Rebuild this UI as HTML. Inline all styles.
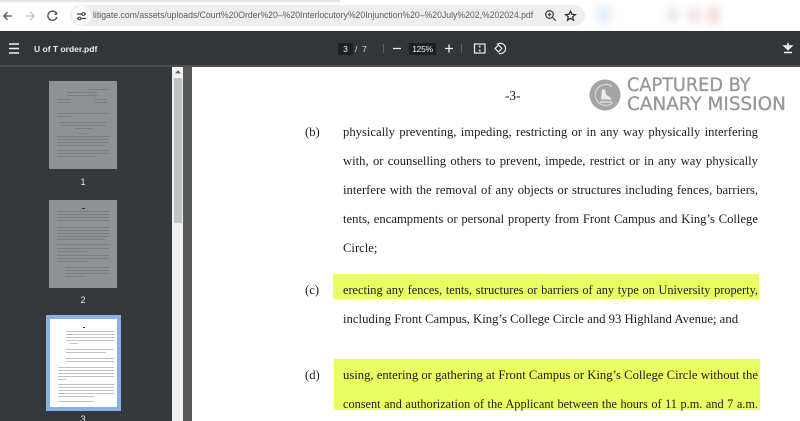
<!DOCTYPE html>
<html><head><meta charset="utf-8"><style>
*{box-sizing:border-box}
html,body{margin:0;padding:0;width:800px;height:421px;overflow:hidden;background:#fff}
body{position:relative;font-family:"Liberation Sans",sans-serif}
.a{position:absolute}
.l{position:absolute;left:343px;width:415px;font:12.65px/18px "Liberation Serif",serif;color:#1c1c1c;text-align:justify;text-align-last:justify;white-space:normal}
.m{position:absolute;left:305px;font:12.65px/18px "Liberation Serif",serif;color:#1c1c1c}
.tn{position:absolute;left:49px;width:68px;background:#8f9192;overflow:hidden}
.tn i,.t3 i{position:absolute;display:block;height:1px}
.tn i{background:#7b7d7e}
.t3 i{background:#c2c2c2}
.num{position:absolute;width:20px;text-align:center;left:73px;font-size:9px;color:#e8e8e8}
</style></head><body>
<div class="a" style="left:0;top:0;width:800px;height:31px;background:#fff"></div>
<div class="a" style="left:0;top:0;width:340px;height:2px;background:#e6e6e6"></div>
<div class="a" style="left:70px;top:5px;width:515px;height:21px;border-radius:11px;background:#f0eeeb"></div>
<div class="a" style="left:72px;top:6px;width:19px;height:19px;border-radius:50%;background:#fbfbfa"></div>
<div class="a" style="left:590px;top:4px;width:210px;height:22px;filter:blur(4px)">
<div class="a" style="left:7px;top:2px;width:14px;height:18px;background:#e3edf8"></div>
<div class="a" style="left:77px;top:4px;width:11px;height:14px;background:#e6ebe7"></div>
<div class="a" style="left:97px;top:3px;width:13px;height:16px;background:#f5e4e4"></div>
<div class="a" style="left:117px;top:2px;width:13px;height:18px;background:#f8dcdc"></div>
</div>
<svg class="a" style="left:0;top:0" width="800" height="31" fill="none">
<path d="M12 16H4M7.5 12.2 3.8 16l3.7 3.8" stroke="#555" stroke-width="1.3"/>
<path d="M26 16h8M30.5 12.2l3.7 3.8-3.7 3.8" stroke="#bbb" stroke-width="1.3"/>
<path d="M56.5 13.5a4.6 4.6 0 1 0 .4 3.5" stroke="#555" stroke-width="1.4"/><path d="M57.2 11.5v3.4h-3.4z" fill="#555"/>
<path d="M77 14h5M85 14h1M77 18.5h1M81 18.5h5" stroke="#444" stroke-width="1.3"/><circle cx="83.5" cy="14" r="1.4" stroke="#444"/><circle cx="79.5" cy="18.5" r="1.4" stroke="#444"/>
<circle cx="549.5" cy="14.5" r="3.8" stroke="#444" stroke-width="1.3"/><path d="m552.3 17.3 3.6 3.4M547.8 14.5h3.4M549.5 12.8v3.4" stroke="#444" stroke-width="1.2"/>
<path d="m570.5 11.2 1.4 3.1 3.4.3-2.6 2.2.8 3.3-3-1.8-3 1.8.8-3.3-2.6-2.2 3.4-.3z" stroke="#333" stroke-width="1.3"/>
</svg>
<div class="a" style="left:93px;top:9px;font-size:9.6px;line-height:14px;color:#5c5c5c;white-space:nowrap;transform-origin:0 0;transform:scaleX(.905)">litigate.com/assets/uploads/Court%20Order%20–%20Interlocutory%20Injunction%20–%20July%202,%202024.pdf</div>

<div class="a" style="left:0;top:31px;width:800px;height:35px;background:#323639"></div>
<div class="a" style="left:0;top:65px;width:800px;height:2px;background:#4a4d4f"></div>
<svg class="a" style="left:0;top:31px" width="800" height="35" fill="none">
<path d="M9 13h10M9 17.5h10M9 22h10" stroke="#f1f1f1" stroke-width="1.4"/>
<path d="M383.5 13v9M461.5 13v9" stroke="#5d6063"/>
<path d="M393 17.5h8M445 17.5h8M449 13.5v8" stroke="#eee" stroke-width="1.3"/>
<rect x="474.5" y="13" width="10.5" height="9" stroke="#eee" stroke-width="1.2"/><path d="M479.8 14.5v2M479.8 18.5v2" stroke="#eee" stroke-width="1.3"/>
<path d="M497 13.5a5.2 5.2 0 1 1 2 9" stroke="#eee" stroke-width="1.2"/><path d="m498.5 14 3.4 3.5-3.4 3.5-3.4-3.5z" stroke="#eee" stroke-width="1.2"/>
<path d="M788 12v5M784.5 15l3.5 3.5 3.500-3.500z" stroke="#f1f1f1" stroke-width="1.6"/><path d="M784 21.5h8" stroke="#f1f1f1" stroke-width="1.5"/>
</svg>
<div class="a" style="left:34px;top:42px;font-size:8.5px;font-weight:bold;line-height:14px;color:#ececec;white-space:nowrap">U of T order.pdf</div>
<div class="a" style="left:338px;top:43px;width:15px;height:12px;background:#1d2023;color:#eee;font-size:8.5px;line-height:12px;text-align:center">3</div>
<div class="a" style="left:355px;top:43px;font-size:8.5px;line-height:12px;color:#ddd">/ &nbsp;7</div>
<div class="a" style="left:409px;top:43px;width:27px;height:12px;background:#1d2023;color:#eee;font-size:8.5px;letter-spacing:-.3px;line-height:12px;text-align:center">125%</div>

<div class="a" style="left:0;top:67px;width:172px;height:354px;background:#35393c"></div>
<div class="a" style="left:172px;top:67px;width:11px;height:354px;background:#f1f1f1"></div>
<div class="a" style="left:174px;top:78px;width:8px;height:145px;background:#c1c3c1"></div>
<svg class="a" style="left:174px;top:69px" width="8" height="6"><path d="M4 1 7 4.5H1z" fill="#6a6a6a"/></svg>
<div class="a" style="left:183px;top:67px;width:9px;height:354px;background:#55585a"></div>

<div class="tn" style="top:81px;height:88px">
<i style="left:38px;top:8px;width:22px"></i><i style="left:18px;top:11px;width:30px"></i><i style="left:18px;top:14px;width:30px"></i>
<i style="left:8px;top:18px;width:14px"></i><i style="left:46px;top:18px;width:12px"></i><i style="left:8px;top:21px;width:14px"></i><i style="left:46px;top:21px;width:12px"></i>
<i style="left:8px;top:32px;width:52px"></i><i style="left:8px;top:35px;width:16px"></i><i style="left:10px;top:41px;width:48px"></i><i style="left:12px;top:44px;width:44px"></i><i style="left:26px;top:47px;width:18px"></i>
<i style="left:30px;top:52px;width:8px"></i><i style="left:8px;top:55px;width:52px"></i><i style="left:8px;top:58px;width:52px"></i><i style="left:8px;top:61px;width:52px"></i><i style="left:8px;top:64px;width:48px"></i>
<i style="left:8px;top:69px;width:52px"></i><i style="left:8px;top:72px;width:52px"></i><i style="left:8px;top:75px;width:40px"></i>
</div>
<div class="num" style="top:177px">1</div>
<div class="tn" style="top:200px;height:88px">
<i style="left:33px;top:8px;width:3px;background:#333"></i><i style="left:8px;top:11px;width:52px"></i><i style="left:8px;top:14px;width:52px"></i>
<i style="left:8px;top:17px;width:52px"></i><i style="left:8px;top:20px;width:52px"></i><i style="left:8px;top:27px;width:52px"></i><i style="left:8px;top:30px;width:52px"></i><i style="left:8px;top:33px;width:52px"></i><i style="left:8px;top:36px;width:52px"></i><i style="left:8px;top:39px;width:48px"></i>
<i style="left:8px;top:44px;width:52px"></i><i style="left:8px;top:48px;width:52px"></i><i style="left:8px;top:51px;width:30px"></i>
<i style="left:8px;top:55px;width:52px"></i><i style="left:8px;top:58px;width:52px"></i><i style="left:8px;top:61px;width:30px"></i>
<i style="left:16px;top:67px;width:44px"></i><i style="left:16px;top:70px;width:44px"></i><i style="left:16px;top:73px;width:44px"></i><i style="left:16px;top:76px;width:20px"></i>
</div>
<div class="num" style="top:295px">2</div>
<div class="a t3" style="left:46px;top:315px;width:75px;height:96px;background:#fff;border:4px solid #8ab0ea">
<i style="left:33px;top:8px;width:2px;background:#222"></i>
<i style="left:16px;top:12px;width:48px"></i><i style="left:16px;top:15px;width:48px"></i><i style="left:16px;top:18px;width:48px"></i><i style="left:16px;top:21px;width:48px"></i><i style="left:20px;top:24px;width:8px"></i>
<i style="left:16px;top:30px;width:48px"></i><i style="left:16px;top:33px;width:40px"></i><i style="left:16px;top:39px;width:48px"></i><i style="left:16px;top:42px;width:48px"></i>
<i style="left:8px;top:48px;width:56px"></i><i style="left:8px;top:51px;width:56px"></i><i style="left:8px;top:54px;width:56px"></i><i style="left:8px;top:57px;width:56px"></i><i style="left:8px;top:60px;width:8px"></i>
<i style="left:8px;top:65px;width:56px"></i><i style="left:8px;top:68px;width:56px"></i><i style="left:8px;top:71px;width:56px"></i><i style="left:8px;top:74px;width:56px"></i><i style="left:8px;top:77px;width:36px"></i><i style="left:8px;top:82px;width:36px"></i>
</div>
<div class="num" style="top:414px">3</div>

<div class="a" style="left:333px;top:274px;width:426px;height:25px;background:#eaff62"></div>
<div class="a" style="left:334px;top:359px;width:426px;height:51px;background:#eaff62"></div>

<div class="a" style="left:505px;top:87px;font:13.3px/18px 'Liberation Serif',serif;color:#1c1c1c">-3-</div>
<div class="m" style="top:123px">(b)</div>
<div class="l" style="top:123px">physically preventing, impeding, restricting or in any way physically interfering</div>
<div class="l" style="top:152px">with, or counselling others to prevent, impede, restrict or in any way physically</div>
<div class="l" style="top:181px">interfere with the removal of any objects or structures including fences, barriers,</div>
<div class="l" style="top:210px">tents, encampments or personal property from Front Campus and King’s College</div>
<div class="l" style="top:239px;text-align-last:left">Circle;</div>
<div class="m" style="top:281px">(c)</div>
<div class="l" style="top:281px;font-size:12.3px">erecting any fences, tents, structures or barriers of any type on University property,</div>
<div class="l" style="top:310px;text-align-last:left;font-size:12.72px">including Front Campus, King’s College Circle and 93 Highland Avenue; and</div>
<div class="m" style="top:366px">(d)</div>
<div class="l" style="top:366px">using, entering or gathering at Front Campus or King’s College Circle without the</div>
<div class="l" style="top:395px;font-size:12.3px">consent and authorization of the Applicant between the hours of 11 p.m. and 7 a.m.</div>

<svg class="a" style="left:589px;top:79px" width="33" height="33" fill="none">
<circle cx="16" cy="16" r="15.5" fill="#a5a5a5"/>
<path d="M23 7.5A10.5 10.5 0 1 0 23.5 24" stroke="#d4d4d4" stroke-width="1.3"/>
<path d="M13 10.5h3l1 5 5 3.500v1.500H12z" fill="#eee"/><path d="M11 23h12" stroke="#eee" stroke-width="1.2"/>
</svg>
<div class="a" style="left:627px;top:75px;font-size:18.8px;line-height:21px;color:#979797;-webkit-text-stroke:.3px #979797;white-space:nowrap;font-family:'DejaVu Sans',sans-serif;transform-origin:0 0;transform:scaleX(.942)">CAPTURED BY</div>
<div class="a" style="left:627px;top:94px;font-size:18.8px;line-height:21px;color:#979797;-webkit-text-stroke:.3px #979797;white-space:nowrap;font-family:'DejaVu Sans',sans-serif;transform-origin:0 0;transform:scaleX(.98)">CANARY MISSION</div>
</body></html>
